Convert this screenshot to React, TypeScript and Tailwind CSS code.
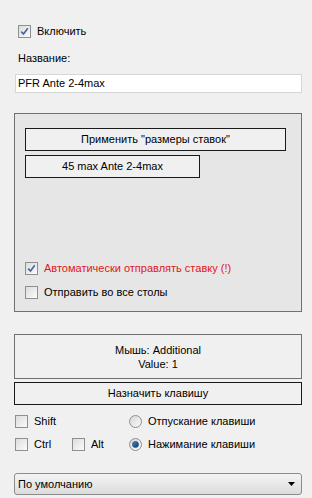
import React from 'react';

const font = "font-['Liberation_Sans',Arial,sans-serif]";

const Check: React.FC<{ checked?: boolean }> = ({ checked }) => (
  <span className="relative w-[13px] h-[13px] shrink-0 border border-[#8e8f8f] bg-gradient-to-br from-[#dcdcdc] to-[#fbfbfb] flex items-center justify-center">
    {checked && (
      <svg width="9" height="9" viewBox="0 0 9 9">
        <path d="M1.2 4.6 L3.5 7 L7.8 1.2" fill="none" stroke="#4862a3" strokeWidth="1.6" />
      </svg>
    )}
  </span>
);

const Radio: React.FC<{ checked?: boolean }> = ({ checked }) => (
  <span className="w-[13px] h-[13px] shrink-0 rounded-full border border-[#8e8f8f] bg-gradient-to-br from-[#d6d6d6] to-[#fafafa] flex items-center justify-center">
    {checked && <span className="w-[7px] h-[7px] rounded-full bg-gradient-to-br from-[#3a8ad0] to-[#0c3b70] border border-[#1f4f82]" />}
  </span>
);

const CheckRow: React.FC<{ checked?: boolean; label: string; className?: string; textClass?: string }> = ({ checked, label, className, textClass }) => (
  <div className={`flex items-center gap-[6px] h-[13px] ${className ?? ''}`}>
    <Check checked={checked} />
    <span className={`text-[11px] leading-none ${textClass ?? 'text-black'}`}>{label}</span>
  </div>
);

const App: React.FC = () => {
  return (
    <div className={`w-[312px] h-[498px] bg-[#f0f0f0] overflow-hidden flex flex-col ${font} text-[11px] text-black`}>
      <CheckRow checked label="Включить" className="ml-[18px] mt-[25px]" />

      <div className="ml-[18px] mt-[15px] leading-none h-[12px]">Название:</div>

      <div className="mx-[15px] mt-[9px] w-[287px] h-[19px] bg-white border border-[#d6d6d6] flex items-center px-[2px]">
        PFR Ante 2-4max
      </div>

      <div className="ml-[14px] mt-[20px] w-[288px] h-[199px] bg-[#e6e6e6] border border-[#707070] flex flex-col pl-[10px]">
        <button className="mt-[14px] w-[261px] h-[23px] border border-[#1a1a1a] bg-[#f0f0f0] flex items-center justify-center">
          Применить "размеры ставок"
        </button>
        <button className="mt-[4px] w-[175px] h-[23px] border border-[#1a1a1a] bg-[#f0f0f0] flex items-center justify-center">
          45 max Ante 2-4max
        </button>
        <CheckRow checked label="Автоматически отправлять ставку (!)" className="mt-[84px]" textClass="text-[#e0161b]" />
        <CheckRow label="Отправить во все столы" className="mt-[11px]" />
      </div>

      <div className="ml-[14px] mt-[22px] w-[288px] h-[45px] border border-[#707070] bg-[#f0f0f0] flex flex-col items-center justify-center leading-[14px]">
        <span>Мышь: Additional</span>
        <span>Value: 1</span>
      </div>

      <button className="ml-[14px] mt-[3px] w-[288px] h-[23px] border border-[#1a1a1a] bg-[#f0f0f0] flex items-center justify-center">
        Назначить клавишу
      </button>

      <div className="ml-[15px] mt-[10px] flex">
        <div className="w-[114px] flex flex-col gap-[10px]">
          <CheckRow label="Shift" />
          <div className="flex">
            <CheckRow label="Ctrl" className="w-[57px]" />
            <CheckRow label="Alt" />
          </div>
        </div>
        <div className="flex flex-col gap-[10px]">
          <div className="flex items-center gap-[6px] h-[13px]">
            <Radio />
            <span className="leading-none">Отпускание клавиши</span>
          </div>
          <div className="flex items-center gap-[6px] h-[13px]">
            <Radio checked />
            <span className="leading-none">Нажимание клавиши</span>
          </div>
        </div>
      </div>

      <div className="ml-[14px] mt-[22px] w-[288px] h-[22px] rounded-[3px] border border-[#8c8c8c] bg-gradient-to-b from-[#f4f4f4] to-[#dcdcdc] flex items-center justify-between pl-[3px] pr-[6px]">
        <span className="leading-none">По умолчанию</span>
        <svg width="7" height="4" viewBox="0 0 7 4">
          <path d="M0 0 H7 L3.5 4 Z" fill="#000" />
        </svg>
      </div>
    </div>
  );
};

export default App;
